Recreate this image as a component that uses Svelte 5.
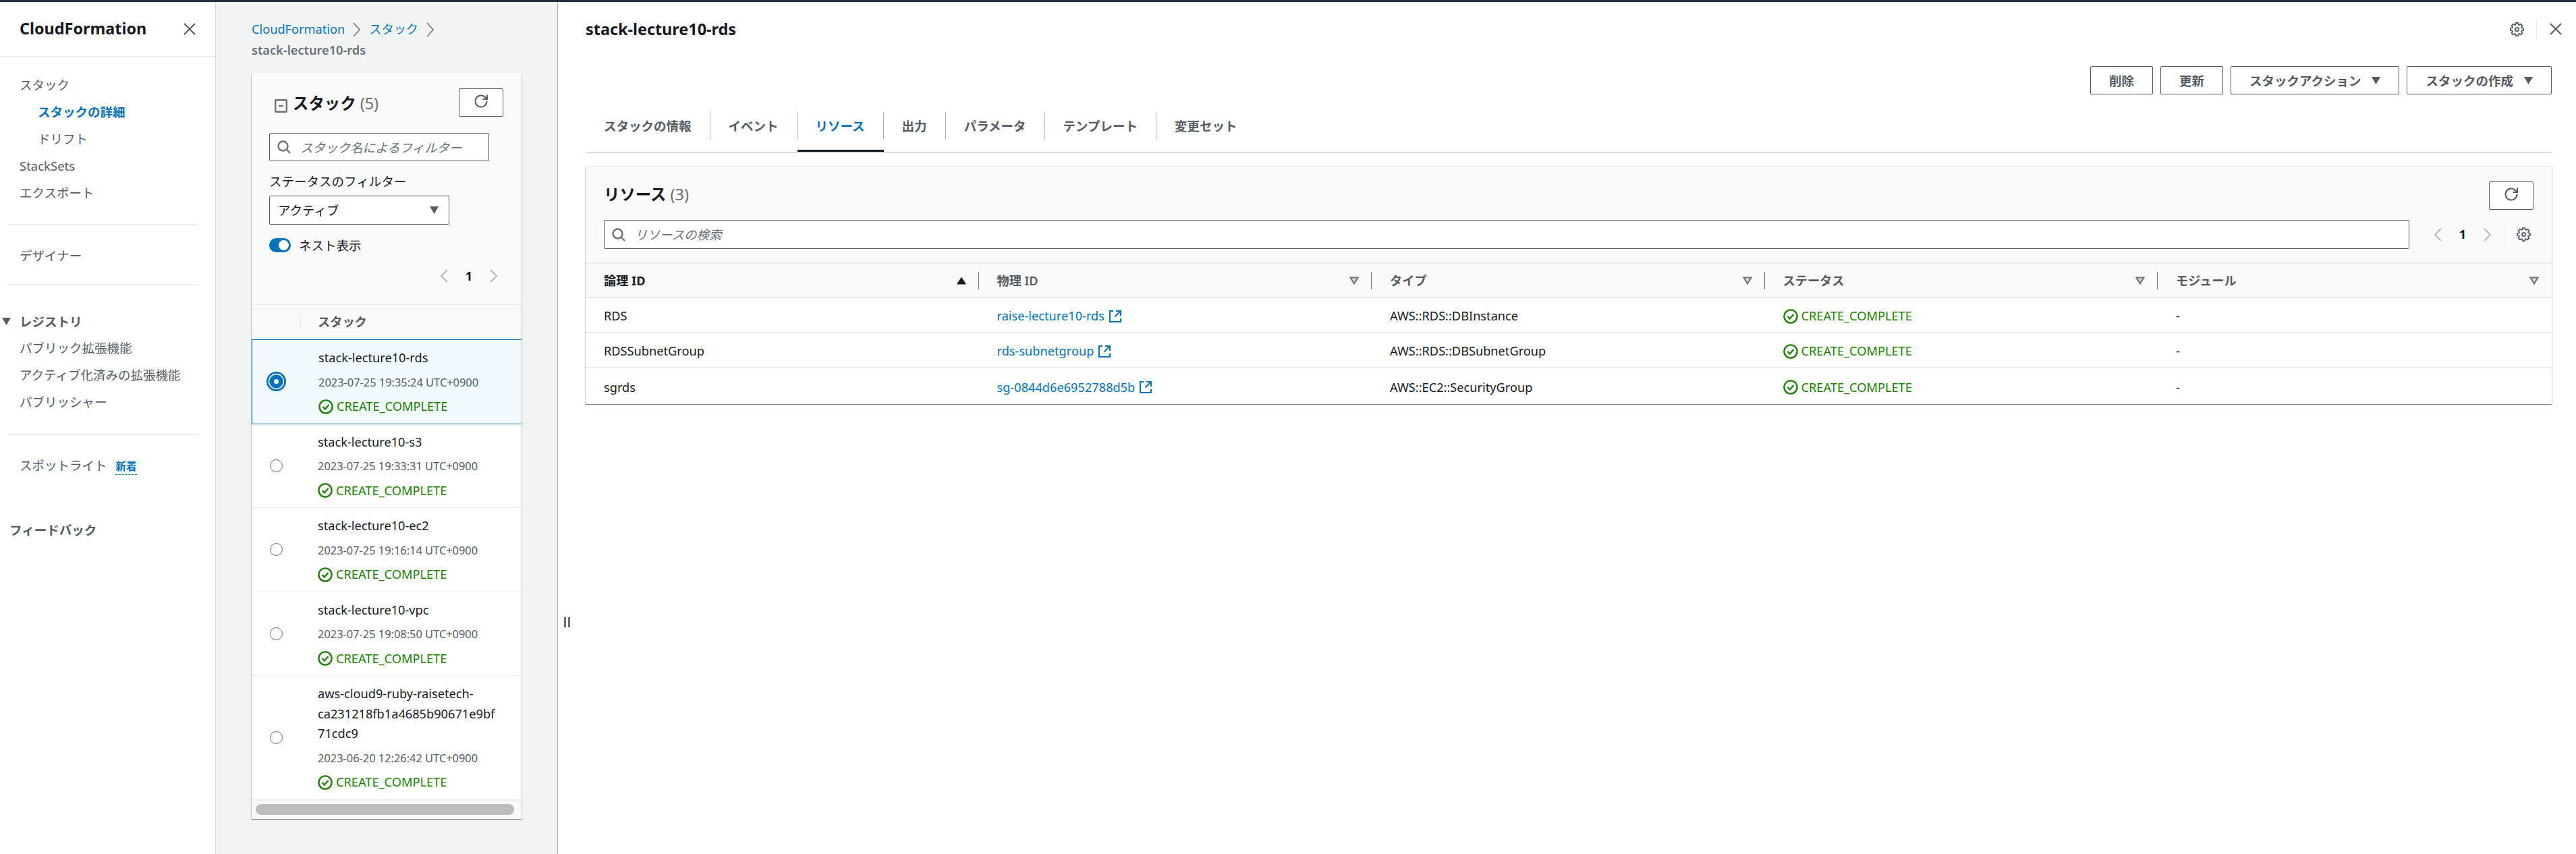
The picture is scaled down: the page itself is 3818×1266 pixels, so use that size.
<script>
  const navTop = [
    { label: 'スタック' },
    { label: 'スタックの詳細', sub: true, active: true },
    { label: 'ドリフト', sub: true },
    { label: 'StackSets' },
    { label: 'エクスポート' }
  ];
  const registry = ['パブリック拡張機能', 'アクティブ化済みの拡張機能', 'パブリッシャー'];

  const stacks = [
    { name: 'stack-lecture10-rds', date: '2023-07-25 19:35:24 UTC+0900', selected: true },
    { name: 'stack-lecture10-s3', date: '2023-07-25 19:33:31 UTC+0900' },
    { name: 'stack-lecture10-ec2', date: '2023-07-25 19:16:14 UTC+0900' },
    { name: 'stack-lecture10-vpc', date: '2023-07-25 19:08:50 UTC+0900' },
    { name: 'aws-cloud9-ruby-raisetech-ca231218fb1a4685b90671e9bf71cdc9', date: '2023-06-20 12:26:42 UTC+0900' }
  ];

  const tabs = ['スタックの情報', 'イベント', 'リソース', '出力', 'パラメータ', 'テンプレート', '変更セット'];
  const columns = ['論理 ID', '物理 ID', 'タイプ', 'ステータス', 'モジュール'];
  const resources = [
    { id: 'RDS', phys: 'raise-lecture10-rds', type: 'AWS::RDS::DBInstance' },
    { id: 'RDSSubnetGroup', phys: 'rds-subnetgroup', type: 'AWS::RDS::DBSubnetGroup' },
    { id: 'sgrds', phys: 'sg-0844d6e6952788d5b', type: 'AWS::EC2::SecurityGroup' }
  ];

  // eight teeth round the gear outline
  const gearPath = (() => {
    const pts = [];
    for (let i = 0; i < 8; i++) {
      const a = (i * Math.PI) / 4;
      [[-0.3, 5.6], [-0.17, 7.4], [0.17, 7.4], [0.3, 5.6]].forEach(([da, r]) => {
        pts.push((8 + r * Math.sin(a + da)).toFixed(2) + ' ' + (8 - r * Math.cos(a + da)).toFixed(2));
      });
    }
    return 'M' + pts.join('L') + 'z';
  })();
</script>

{#snippet closeIcon()}
  <svg class="close" viewBox="0 0 18 18"><path d="M1 1l16 16M17 1L1 17" /></svg>
{/snippet}

{#snippet caret(cls)}
  <svg class={cls} viewBox="0 0 13 11"><path d="M0 0h13L6.5 11z" /></svg>
{/snippet}

{#snippet refreshIcon()}
  <button class="btn refresh" type="button">
    <svg viewBox="0 0 22 22"><path d="M19.5 11a8.5 8.5 0 1 1-2.5-6l2.5 2.5" /><path d="M20 1.5V8h-6.5" /></svg>
  </button>
{/snippet}

{#snippet searchIcon()}
  <svg class="search-icon" viewBox="0 0 20 20"><circle cx="8.5" cy="8.5" r="7" /><path d="M13.5 13.5L19 19" /></svg>
{/snippet}

{#snippet gear()}
  <svg class="gear" viewBox="0 0 16 16">
    <circle cx="8" cy="8" r="2" />
    <path d={gearPath} />
  </svg>
{/snippet}

{#snippet pager(cls)}
  <div class="pager {cls}">
    <svg viewBox="0 0 12 20"><path d="M11 1L2 10l9 9" /></svg>
    <b>1</b>
    <svg viewBox="0 0 12 20"><path d="M1 1l9 9-9 9" /></svg>
  </div>
{/snippet}

{#snippet status()}
  <span class="status">
    <svg viewBox="0 0 22 22"><circle cx="11" cy="11" r="9.6" /><path d="M6.5 11l3.2 3.5 5.8-6.5" /></svg>
    CREATE_COMPLETE
  </span>
{/snippet}

<div class="page">
  <nav class="nav">
    <div class="nav-head">
      <span class="nav-title">CloudFormation</span>
      {@render closeIcon()}
    </div>

    <ul class="nav-list first">
      {#each navTop as item}
        <li class:sub={item.sub} class:active={item.active}>{item.label}</li>
      {/each}
    </ul>
    <hr />
    <ul class="nav-list single"><li>デザイナー</li></ul>
    <hr />
    <div class="nav-group">
      <svg viewBox="0 0 13 11"><path d="M0 0h13L6.5 11z" /></svg>
      レジストリ
    </div>
    <ul class="nav-list">
      {#each registry as item}
        <li>{item}</li>
      {/each}
    </ul>
    <hr class="third" />
    <ul class="nav-list single"><li>スポットライト <span class="new">新着</span></li></ul>
    <div class="feedback">フィードバック</div>
  </nav>

  <section class="list-pane">
    <div class="crumbs">
      <div class="crumb-row">
        <span class="link">CloudFormation</span>
        <svg viewBox="0 0 12 22"><path d="M1 1l9 10-9 10" /></svg>
        <span class="link">スタック</span>
        <svg viewBox="0 0 12 22"><path d="M1 1l9 10-9 10" /></svg>
      </div>
      <div class="crumb-current">stack-lecture10-rds</div>
    </div>

    <div class="panel">
      <div class="panel-filters">
        <div class="panel-head">
          <svg class="collapse" viewBox="0 0 19 20"><rect x="1.2" y="1.2" width="16.6" height="17.6" rx="1" /><path d="M6 10h7" /></svg>
          <h2>スタック <small>(5)</small></h2>
          {@render refreshIcon()}
        </div>
        <div class="input small">
          {@render searchIcon()}
          <span>スタック名によるフィルター</span>
        </div>
        <div class="field-label">ステータスのフィルター</div>
        <div class="select">
          アクティブ
          {@render caret('caret')}
        </div>
        <div class="toggle-row">
          <span class="toggle"><i></i></span>
          ネスト表示
        </div>
        {@render pager('left-pager')}
      </div>

      <div class="stack-head">
        <span class="stack-head-blank"></span>
        <span class="stack-head-label">スタック</span>
      </div>
      {#each stacks as stack}
        <div class="stack" class:selected={stack.selected}>
          <div class="radio-cell">
            {#if stack.selected}
              <svg class="radio-on" viewBox="0 0 29 29"><circle cx="14.5" cy="14.5" r="13.1" /><circle class="ring" cx="14.5" cy="14.5" r="6.9" /></svg>
            {:else}
              <span class="radio-off"></span>
            {/if}
          </div>
          <div class="stack-body">
            <div class="stack-name">{stack.name}</div>
            <div class="stack-date">{stack.date}</div>
            {@render status()}
          </div>
        </div>
      {/each}
      <div class="scroll-track"><div class="scroll-thumb"></div></div>
    </div>
  </section>

  <main class="detail">
    <span class="handle"></span>
    <div class="detail-head">
      <h1>stack-lecture10-rds</h1>
      <div class="head-tools">
        {@render gear()}
        <span class="tool-sep"></span>
        {@render closeIcon()}
      </div>
    </div>

    <div class="actions">
      <button class="btn" type="button">削除</button>
      <button class="btn" type="button">更新</button>
      <button class="btn" type="button">スタックアクション {@render caret('btn-caret')}</button>
      <button class="btn" type="button">スタックの作成 {@render caret('btn-caret')}</button>
    </div>

    <div class="tabs">
      {#each tabs as tab, i}
        <div class="tab" class:current={i === 2}><span>{tab}</span></div>
      {/each}
    </div>

    <div class="card">
      <div class="card-top">
        <div class="card-title">
          <h2>リソース <small>(3)</small></h2>
          {@render refreshIcon()}
        </div>
        <div class="card-search">
          <div class="input wide">
            {@render searchIcon()}
            <span>リソースの検索</span>
          </div>
          {@render pager('card-pager')}
          <span class="tool-sep short"></span>
          {@render gear()}
        </div>
      </div>

      <div class="grid grid-head">
        {#each columns as col, i}
          <div class="th" class:sorted={i === 0}>
            <span>{col}</span>
            {#if i === 0}
              <svg class="sort" viewBox="0 0 14 11"><path d="M7 0l7 11H0z" /></svg>
            {:else}
              <svg class="sort open" viewBox="0 0 14 12"><path d="M1.5 1.5h11L7 10.5z" /></svg>
            {/if}
          </div>
        {/each}
      </div>
      {#each resources as res}
        <div class="grid grid-row">
          <div class="td">{res.id}</div>
          <div class="td link">
            {res.phys}
            <svg class="ext" viewBox="0 0 20 20"><path d="M7 2H2v16h16v-5" /><path d="M11 2h7v7" /><path d="M18 2l-8.5 8.5" /></svg>
          </div>
          <div class="td">{res.type}</div>
          <div class="td">{@render status()}</div>
          <div class="td">-</div>
        </div>
      {/each}
    </div>
  </main>
</div>

<style>
  :global(body) {
    margin: 0;
    background: #fff;
  }

  .page {
    display: flex;
    width: 3818px;
    height: 1266px;
    box-sizing: border-box;
    border-top: 3px solid #232f3e;
    overflow: hidden;
    font-family: 'Noto Sans', 'Noto Sans CJK JP', sans-serif;
    font-size: 18.2px;
    line-height: 29px;
    color: #16191f;
  }

  ul {
    list-style: none;
    margin: 0;
    padding: 0;
  }

  h1,
  h2 {
    margin: 0;
    font-size: 23.4px;
    font-weight: 700;
  }

  small {
    font-size: 23.4px;
    font-weight: 400;
    color: #687078;
  }

  .link {
    color: #0073bb;
  }

  /* left nav */
  .nav {
    width: 319px;
    flex: none;
    border-right: 1px solid #d5dbdb;
    color: #545b64;
    font-size: 18.5px;
  }

  .nav-head {
    display: flex;
    align-items: center;
    justify-content: space-between;
    height: 82px;
    padding: 0 29px;
    box-sizing: border-box;
    border-bottom: 2px solid #eaeded;
  }

  .nav-title {
    font-size: 23.4px;
    font-weight: 700;
    color: #16191f;
    margin-top: -1px;
  }

  .close {
    width: 18px;
    height: 18px;
    fill: none;
    stroke: #545b64;
    stroke-width: 2;
  }

  .nav-list li {
    height: 40px;
    line-height: 40px;
    padding-left: 29px;
  }

  .nav-list.first {
    padding-top: 21px;
  }

  .nav-list.single {
    padding-top: 25px;
  }

  .nav-list li.sub {
    padding-left: 56px;
  }

  .nav-list li.active {
    color: #0073bb;
    font-weight: 700;
  }

  hr {
    margin: 26px 26px 0 13px;
    border: 0;
    border-top: 2px solid #eaeded;
  }

  .nav-list.single + hr {
    margin-top: 22px;
  }

  hr.third {
    margin-top: 27px;
  }

  .nav-group {
    display: flex;
    align-items: center;
    height: 40px;
    margin-top: 33px;
    padding-left: 3px;
    gap: 13px;
    font-weight: 600;
  }

  .nav-group svg {
    width: 13px;
    height: 11px;
    fill: #545b64;
  }

  .new {
    margin-left: 8px;
    font-size: 15.6px;
    font-weight: 700;
    color: #0073bb;
    border-bottom: 1px dashed #0073bb;
    padding-bottom: 1px;
  }

  .feedback {
    margin-top: 56px;
    padding-left: 14px;
    line-height: 40px;
    font-weight: 700;
  }

  /* stack list */
  .list-pane {
    width: 507px;
    flex: none;
    box-sizing: border-box;
    padding: 25px 53px 0 53px;
    background: #f2f3f3;
    border-right: 1px solid #aab7b8;
  }

  .crumbs {
    height: 81px;
  }

  .crumb-row {
    display: flex;
    align-items: center;
    height: 31px;
    gap: 12px;
  }

  .crumb-row svg {
    width: 12px;
    height: 22px;
    fill: none;
    stroke: #687078;
    stroke-width: 1.5;
  }

  .crumb-current {
    line-height: 31px;
    font-weight: 600;
    color: #687078;
  }

  .panel {
    background: #fff;
    box-shadow: 0 1px 1px 0 rgba(0, 28, 36, 0.3), 1px 1px 1px 0 rgba(0, 28, 36, 0.15), -1px 1px 1px 0 rgba(0, 28, 36, 0.15);
  }

  .panel-filters {
    background: #fafafa;
    padding: 22px 27px 0 26px;
    height: 343px;
    box-sizing: border-box;
    border-bottom: 1px solid #eaeded;
  }

  .panel-head {
    display: flex;
    align-items: center;
    height: 42px;
  }

  .collapse {
    width: 19px;
    height: 20px;
    margin: 10px 8px 0 8px;
    flex: none;
    fill: none;
    stroke: #687078;
    stroke-width: 2.4;
  }

  .panel-head h2 {
    flex: 1;
    line-height: 42px;
    margin-top: 1px;
  }

  .btn {
    display: inline-flex;
    align-items: center;
    justify-content: center;
    height: 42px;
    padding: 0 27px;
    box-sizing: border-box;
    background: #fff;
    border: 1px solid #545b64;
    border-radius: 2px;
    font: inherit;
    font-size: 18.5px;
    font-weight: 600;
    color: #545b64;
  }

  .refresh {
    width: 66px;
    padding: 0;
    flex: none;
  }

  .refresh svg {
    width: 22px;
    height: 22px;
    margin-top: -4px;
    fill: none;
    stroke: #545b64;
    stroke-width: 2;
  }

  .input {
    display: flex;
    align-items: center;
    height: 42px;
    box-sizing: border-box;
    background: #fff;
    border: 1px solid #545b64;
    border-radius: 2px;
    color: #687078;
    font-size: 18.5px;
    font-style: italic;
  }

  .input.small {
    width: 326px;
    margin-top: 24px;
    padding-left: 11px;
    gap: 14px;
  }

  .search-icon {
    width: 20px;
    height: 20px;
    flex: none;
    fill: none;
    stroke: #687078;
    stroke-width: 2.4;
  }

  .field-label {
    margin-top: 16px;
    line-height: 28px;
    font-size: 18.5px;
  }

  .select {
    display: flex;
    align-items: center;
    justify-content: space-between;
    width: 267px;
    height: 43px;
    margin-top: 7px;
    padding: 0 15px 0 12px;
    box-sizing: border-box;
    background: #fff;
    border: 1px solid #545b64;
    border-radius: 2px;
    font-size: 18.5px;
  }

  .caret {
    width: 13px;
    height: 11px;
    fill: #545b64;
  }

  .toggle-row {
    display: flex;
    align-items: center;
    gap: 12px;
    height: 21px;
    margin-top: 20px;
    font-size: 18.5px;
  }

  .toggle {
    display: block;
    position: relative;
    width: 32px;
    height: 21px;
    border-radius: 11px;
    background: #0073bb;
  }

  .toggle i {
    position: absolute;
    top: 3px;
    right: 3px;
    width: 15px;
    height: 15px;
    border-radius: 50%;
    background: #fff;
  }

  .pager {
    display: flex;
    align-items: center;
    justify-content: space-between;
    height: 30px;
  }

  .pager svg {
    width: 12px;
    height: 20px;
    fill: none;
    stroke: #aab7b8;
    stroke-width: 1.8;
  }

  .pager b {
    font-weight: 700;
    color: #16191f;
  }

  .left-pager {
    width: 86px;
    margin: 20px 8px 0 auto;
  }

  .stack-head {
    display: flex;
    align-items: center;
    height: 51px;
    background: #fafafa;
  }

  .stack-head-blank {
    width: 72px;
    height: 25px;
    border-right: 1px solid #eaeded;
  }

  .stack-head-label {
    padding-left: 25px;
    font-weight: 700;
    color: #545b64;
  }

  .stack {
    display: flex;
    border-top: 1px solid #eaeded;
    background: #fff;
  }

  .stack.selected {
    background: #f1faff;
    border-top: 1px solid #0073bb;
    border-bottom: 1px solid #0073bb;
    border-left: 1px solid #0073bb;
    margin-bottom: -1px;
    position: relative;
  }

  .radio-cell {
    width: 72px;
    flex: none;
    display: flex;
    align-items: center;
    justify-content: center;
  }

  .radio-off {
    display: block;
    width: 19px;
    height: 19px;
    box-sizing: border-box;
    border: 1.6px solid #687078;
    border-radius: 50%;
    background: #fff;
  }

  .radio-on {
    width: 29px;
    height: 29px;
    margin-left: -1px;
    fill: #fff;
    stroke: #0073bb;
    stroke-width: 2.8;
  }

  .radio-on .ring {
    stroke-width: 6.8;
  }

  .stack-body {
    flex: 1;
    min-width: 0;
    padding: 12px 35px 12.1px 26px;
  }

  .stack-name {
    line-height: 29.5px;
    overflow-wrap: anywhere;
  }

  .stack-date {
    margin-top: 9px;
    line-height: 24px;
    font-size: 16.4px;
    color: #545b64;
  }

  .stack .status {
    margin-top: 11px;
  }

  .status {
    display: flex;
    align-items: center;
    gap: 5px;
    height: 26px;
    color: #1d8102;
  }

  .status svg {
    width: 22px;
    height: 22px;
    flex: none;
    fill: none;
    stroke: #1d8102;
    stroke-width: 2.4;
  }

  .scroll-track {
    height: 29px;
    padding: 5px 6px;
    box-sizing: border-box;
    background: #fafafa;
    border-top: 2px solid #eaeded;
  }

  .scroll-thumb {
    height: 16px;
    width: 383px;
    border-radius: 8px;
    background: #bdbdbd;
  }

  /* detail */
  .detail {
    flex: 1;
    min-width: 0;
    position: relative;
    padding: 20px 36px 0 41px;
  }

  .handle {
    position: absolute;
    left: 9px;
    top: 912px;
    width: 9px;
    height: 15px;
    border-left: 3px solid #687078;
    border-right: 3px solid #687078;
    box-sizing: border-box;
  }

  .detail-head {
    display: flex;
    align-items: center;
    justify-content: space-between;
    height: 40px;
  }

  .head-tools {
    display: flex;
    align-items: center;
    margin-right: -15px;
  }

  .gear {
    width: 21px;
    height: 21px;
    fill: none;
    stroke: #545b64;
    stroke-width: 1.4;
    stroke-linejoin: round;
    flex: none;
  }

  .tool-sep {
    width: 1px;
    height: 30px;
    margin: 0 19px 0 18px;
    background: #eaeded;
    flex: none;
  }

  .actions {
    display: flex;
    justify-content: flex-end;
    gap: 11px;
    margin-top: 35px;
  }

  .btn-caret {
    width: 13px;
    height: 11px;
    margin-left: 16px;
    fill: #545b64;
  }

  .tabs {
    display: flex;
    margin-top: 27px;
    height: 58px;
    border-bottom: 1px solid #aab7b8;
    font-size: 18.5px;
    font-weight: 600;
    color: #545b64;
  }

  .tab {
    height: 58px;
    box-sizing: border-box;
    border-bottom: 3px solid transparent;
  }

  .tab span {
    display: block;
    height: 40px;
    line-height: 40px;
    padding: 0 27px;
    border-right: 1px solid #aab7b8;
  }

  .tab:last-child span {
    border-right: 0;
  }

  .tab.current {
    border-bottom-color: #16191f;
    color: #0073bb;
  }

  .card {
    margin-top: 20px;
    box-shadow: 0 1px 1px 0 rgba(0, 28, 36, 0.3), 1px 1px 1px 0 rgba(0, 28, 36, 0.15), -1px 1px 1px 0 rgba(0, 28, 36, 0.15);
  }

  .card-top {
    height: 145px;
    box-sizing: border-box;
    padding: 22px 27px 0 27px;
    background: #fafafa;
    border-top: 1px solid #eaeded;
    border-bottom: 2px solid #eaeded;
  }

  .card-title {
    display: flex;
    align-items: center;
    justify-content: space-between;
    height: 42px;
  }

  .card-title h2 {
    margin-top: -3px;
  }

  .card-search {
    display: flex;
    align-items: center;
    margin-top: 15px;
  }

  .input.wide {
    width: 2676px;
    height: 43px;
    padding-left: 11px;
    gap: 14px;
  }

  .card-pager {
    width: 86px;
    margin-left: 36px;
  }

  .tool-sep.short {
    height: 43px;
    margin: 0 17px 0 19px;
  }

  .grid {
    display: grid;
    grid-template-columns: repeat(4, 582.5px) 1fr;
  }

  .grid-head {
    height: 51px;
    background: #fafafa;
    border-bottom: 2px solid #eaeded;
    box-sizing: border-box;
  }

  .th {
    display: flex;
    align-items: center;
    justify-content: space-between;
    padding: 1px 19px 0 27px;
    font-weight: 600;
    color: #545b64;
    position: relative;
  }

  .th::after {
    content: '';
    position: absolute;
    right: 0;
    top: 12px;
    height: 26px;
    width: 1px;
    background: #687078;
  }

  .th:last-child::after {
    display: none;
  }

  .th.sorted {
    color: #16191f;
    font-weight: 700;
  }

  .sort {
    width: 14px;
    height: 12px;
    fill: #16191f;
    flex: none;
  }

  .sort.open {
    fill: #d5dbdb;
    stroke: #687078;
    stroke-width: 2;
  }

  .grid-row {
    height: 52px;
    border-bottom: 2px solid #eaeded;
    box-sizing: border-box;
    background: #fff;
  }

  .grid-row:last-child {
    height: 53px;
    border-bottom: 0;
  }

  .td {
    display: flex;
    align-items: center;
    gap: 6px;
    padding: 3px 0 0 27px;
  }

  .ext {
    width: 20px;
    height: 20px;
    fill: none;
    stroke: #0073bb;
    stroke-width: 2;
  }
</style>
